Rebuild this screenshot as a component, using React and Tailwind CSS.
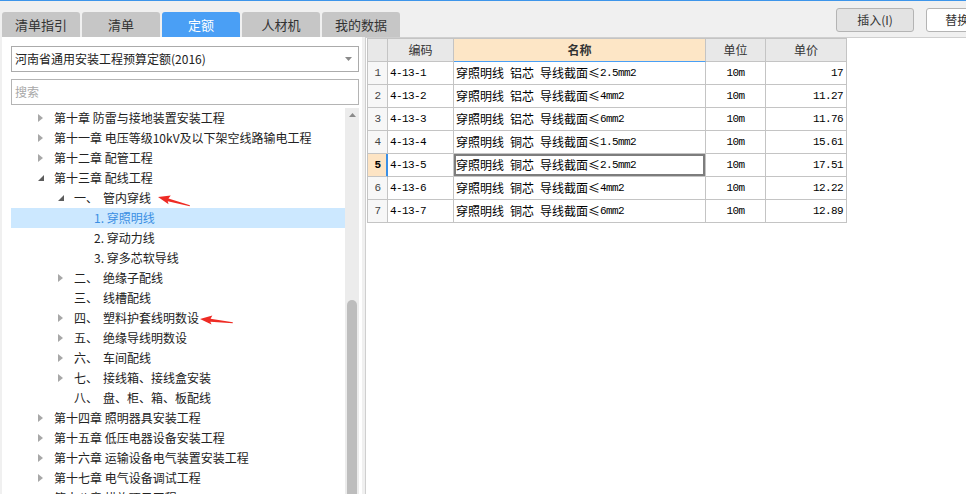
import React from "react";

const tree = [
  { l: 1, a: "c", t: "第十章 防雷与接地装置安装工程" },
  { l: 1, a: "c", t: "第十一章 电压等级10kV及以下架空线路输电工程" },
  { l: 1, a: "c", t: "第十二章 配管工程" },
  { l: 1, a: "e", t: "第十三章 配线工程" },
  { l: 2, a: "e", n: "一、", t: "管内穿线" },
  { l: 3, t: "1. 穿照明线", sel: true },
  { l: 3, t: "2. 穿动力线" },
  { l: 3, t: "3. 穿多芯软导线" },
  { l: 2, a: "c", n: "二、", t: "绝缘子配线" },
  { l: 2, n: "三、", t: "线槽配线" },
  { l: 2, a: "c", n: "四、", t: "塑料护套线明数设" },
  { l: 2, a: "c", n: "五、", t: "绝缘导线明数设" },
  { l: 2, a: "c", n: "六、", t: "车间配线" },
  { l: 2, a: "c", n: "七、", t: "接线箱、接线盒安装" },
  { l: 2, n: "八、", t: "盘、柜、箱、板配线" },
  { l: 1, a: "c", t: "第十四章 照明器具安装工程" },
  { l: 1, a: "c", t: "第十五章 低压电器设备安装工程" },
  { l: 1, a: "c", t: "第十六章 运输设备电气装置安装工程" },
  { l: 1, a: "c", t: "第十七章 电气设备调试工程" },
  { l: 1, a: "c", t: "第十八章 措施项目工程" },
];

const rows = [
  ["4-13-1", "铝芯", "2.5mm2", "17"],
  ["4-13-2", "铝芯", "4mm2", "11.27"],
  ["4-13-3", "铝芯", "6mm2", "11.76"],
  ["4-13-4", "铜芯", "1.5mm2", "15.61"],
  ["4-13-5", "铜芯", "2.5mm2", "17.51"],
  ["4-13-6", "铜芯", "4mm2", "12.22"],
  ["4-13-7", "铜芯", "6mm2", "12.89"],
];

const tabs = ["清单指引", "清单", "定额", "人材机", "我的数据"];

const mono = "font-['Liberation_Mono',monospace] text-[11px] tracking-[-0.6px]";
const cjk = "font-['Noto_Sans_CJK_SC',sans-serif] text-[12px] tracking-normal";
const cell = "border-r border-b border-[#c4c4c4] h-[23px] flex items-center";

const Arrow = ({ a }) => {
  if (a === "c")
    return (
      <svg width="5" height="8" viewBox="0 0 5 8">
        <polygon points="0,0 5,4 0,8" fill="#a8a8a8" />
      </svg>
    );
  if (a === "e")
    return (
      <svg width="6" height="6" viewBox="0 0 6 6">
        <polygon points="6,0 6,6 0,6" fill="#5c5c5c" />
      </svg>
    );
  return null;
};

export default function App() {
  return (
    <div className="relative w-[966px] h-[494px] overflow-hidden bg-[#f0f0f0] font-['Noto_Sans_CJK_SC',sans-serif] text-[12px] text-[#222]">
      <div className="h-[1px] bg-[#3d95ea]" />
      {/* top bar */}
      <div className="flex h-[36px]">
        <div className="flex-none flex items-end gap-[2px] pl-[2px]">
          {tabs.map((t) => (
            <div
              key={t}
              className={
                "w-[78px] h-[25px] rounded-t-[3px] flex items-center justify-center text-[13px] " +
                (t === "定额" ? "bg-[#4a9ff5] text-white" : "bg-[#c6c6c6] text-[#333]")
              }
            >
              {t}
            </div>
          ))}
        </div>
        <div className="flex-none flex gap-[12px] ml-[436px] mt-[7px]">
          <div className="w-[78px] h-[24px] flex-none rounded-[3px] border border-[#b4b4b4] bg-[#e3e3e3] flex items-center justify-center text-[#333]">
            插入(I)
          </div>
          <div className="w-[78px] h-[24px] flex-none rounded-[3px] border border-[#b4b4b4] bg-white flex items-center justify-center text-[#333] whitespace-nowrap">
            替换(R)
          </div>
        </div>
      </div>

      {/* main */}
      <div className="flex h-[457px]">
        {/* left panel */}
        <div className="ml-[2px] w-[360px] flex-none bg-white pl-[9px] pr-[3px] pt-[9px] flex flex-col">
          <div className="h-[26px] border border-[#ababab] flex items-center pl-[3px] pr-[6px]">
            <span className="flex-1">河南省通用安装工程预算定额(2016)</span>
            <svg width="7" height="4" viewBox="0 0 7 4">
              <polygon points="0,0 7,0 3.5,4" fill="#8a8a8a" />
            </svg>
          </div>
          <div className="h-[26px] mt-[7px] border border-[#b4b4b4] flex items-center pl-[3px] text-[#a8a8a8]">
            搜索
          </div>
          <div className="mt-[3px] flex flex-1 min-h-0">
            <div className="flex-1 overflow-hidden">
              {tree.map((r, i) => (
                <div
                  key={i}
                  className={
                    "h-[20px] flex items-center whitespace-nowrap " +
                    (r.sel ? "bg-[#cce8ff] text-[#3b8fe3]" : "")
                  }
                  style={{ paddingLeft: 25 + (r.l - 1) * 20 }}
                >
                  <div className="w-[18px] pl-[2px] flex-none flex items-center">
                    <Arrow a={r.a} />
                  </div>
                  {r.n && <span className="mr-[5px]">{r.n}</span>}
                  <span>{r.t}</span>
                </div>
              ))}
            </div>
            <div className="w-[14px] flex-none bg-[#ececec] flex flex-col">
              <div className="h-[14px] flex items-center justify-center">
                <svg width="7" height="4" viewBox="0 0 7 4">
                  <polygon points="0,4 7,4 3.5,0" fill="#8a8a8a" />
                </svg>
              </div>
              <div className="h-[178px]" />
              <div className="flex-1 mx-[2px] rounded-t-[5px] bg-[#bdbdbd]" />
            </div>
          </div>
        </div>

        <div className="w-[3px] flex-none" />

        {/* right panel */}
        <div className="flex-1 bg-white border-l border-t border-[#cfcfcf] pl-[1px]">
          <div className="w-[480px] border-l border-t border-[#c4c4c4] grid grid-cols-[20px_66px_252px_60px_81px]">
            <div className={cell + " bg-[#e8e8e8]"} />
            <div className={cell + " bg-[#e8e8e8] justify-center text-[#333]"}>编码</div>
            <div className={cell + " bg-[#fde6c6] justify-center font-bold text-[#333] border-b-[#4a9ff5]"}>名称</div>
            <div className={cell + " bg-[#e8e8e8] justify-center text-[#333]"}>单位</div>
            <div className={cell + " bg-[#e8e8e8] justify-center text-[#333]"}>单价</div>

            {rows.map((r, i) => {
              const sel = i === 4;
              return (
                <React.Fragment key={r[0]}>
                  <div
                    className={
                      cell +
                      " justify-center " +
                      mono +
                      (sel
                        ? " bg-[#fde4c4] font-bold text-black border-r-[#3b8fe5] shadow-[inset_-1px_0_0_#3b8fe5]"
                        : " bg-[#f7f7f7] text-[#444]")
                    }
                  >
                    {i + 1}
                  </div>
                  <div className={cell + " pl-[2px] " + mono + " text-black"}>{r[0]}</div>
                  <div
                    className={
                      cell +
                      " pl-[2px] text-black" +
                      (sel ? " shadow-[inset_0_0_0_2px_#7d7d7d]" : "")
                    }
                  >
                    <span className={cjk + " mr-[6px]"}>穿照明线</span>
                    <span className={cjk + " mr-[6px]"}>{r[1]}</span>
                    <span className={cjk}>导线截面≤</span>
                    <span className={mono}>{r[2]}</span>
                  </div>
                  <div className={cell + " justify-center " + mono + " text-black"}>10m</div>
                  <div className={cell + " justify-end pr-[3px] " + mono + " text-black"}>{r[3]}</div>
                </React.Fragment>
              );
            })}
          </div>
        </div>
      </div>

      {/* red annotation arrows */}
      <svg className="absolute left-0 top-0 pointer-events-none" width="966" height="494">
        <g transform="translate(158 197) rotate(14)">
          <polygon points="0,0 12,-4.5 10.5,-1.2 33,0.4 33,1.3 10.5,1.8 12,4.5" fill="#ee2b24" />
        </g>
        <g transform="translate(200 319) rotate(5)">
          <polygon points="0,0 12,-4.5 10.5,-1.2 33,0.4 33,1.3 10.5,1.8 12,4.5" fill="#ee2b24" />
        </g>
      </svg>
    </div>
  );
}
